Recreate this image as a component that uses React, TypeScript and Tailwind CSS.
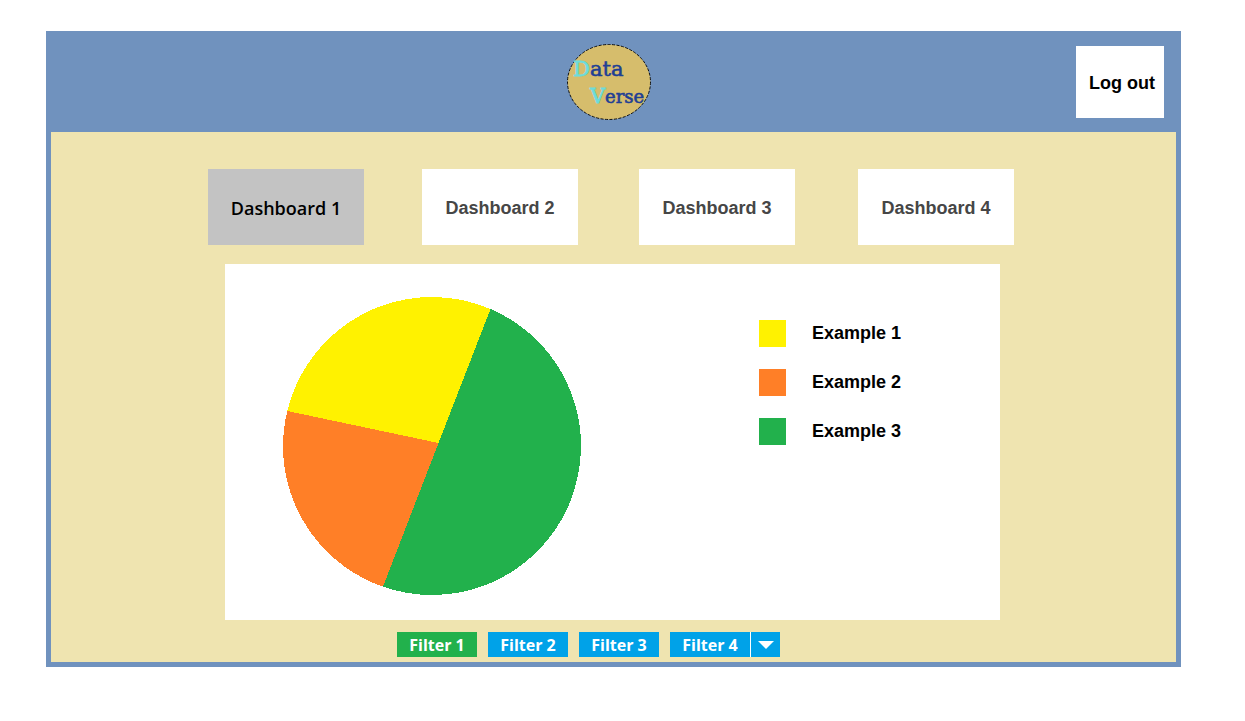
import { useState } from "react";

const dashboards = ["Dashboard 1", "Dashboard 2", "Dashboard 3", "Dashboard 4"];
const filters = ["Filter 1", "Filter 2", "Filter 3"];
const legend = [
  { label: "Example 1", color: "bg-[#fff200]" },
  { label: "Example 2", color: "bg-[#ff7f27]" },
  { label: "Example 3", color: "bg-[#22b14c]" },
];

function Logo() {
  return (
    <svg width="84" height="76" viewBox="0 0 84 76" role="img" aria-label="Data Verse">
      <ellipse cx="42" cy="38" rx="41.5" ry="37.5" fill="#d6bd6c" stroke="#111" strokeDasharray="3 1.5" />
      <g fontFamily="'DejaVu Serif', serif">
        <text x="6" y="32" fontSize="21" fill="#6cdcdc" stroke="#6cdcdc" strokeWidth="0.8">D</text>
        <text x="23" y="32" fontSize="21" fill="#1f3f94" stroke="#1f3f94" strokeWidth="0.6">ata</text>
        <text x="23" y="59" fontSize="21" fill="#6cdcdc" stroke="#6cdcdc" strokeWidth="0.8">V</text>
        <text x="38" y="59" fontSize="18" fill="#1f3f94" stroke="#1f3f94" strokeWidth="0.6">erse</text>
      </g>
    </svg>
  );
}

function PieChart() {
  return (
    <svg width="298" height="298" viewBox="0 0 298 298" shapeRendering="crispEdges" role="img" aria-label="Pie chart" className="shrink-0">
      <path d="M155.5 146 L207.5 12 A149 149 0 0 1 298 149 A149 149 0 0 1 149 298 A149 149 0 0 1 100 289.7 Z" fill="#22b14c" />
      <path d="M155.5 146 L4.3 114 A149 149 0 0 1 149 0 A149 149 0 0 1 207.5 12 Z" fill="#fff200" />
      <path d="M155.5 146 L100 289.7 A149 149 0 0 1 0 149 A149 149 0 0 1 4.3 114 Z" fill="#ff7f27" />
    </svg>
  );
}

export default function App() {
  const [tab, setTab] = useState("Dashboard 1");
  const [filter, setFilter] = useState("Filter 1");

  const filterClass = (name: string) =>
    `h-[25px] w-20 pt-px font-['Open_Sans',sans-serif] text-base font-bold leading-6 text-white ${
      filter === name ? "bg-[#22b14c]" : "bg-[#00a2e8]"
    }`;

  return (
    <div className="min-h-screen bg-white pt-[31px] pr-16 pl-[46px] font-['Liberation_Sans',sans-serif]">
      <div className="border-x-[5px] border-b-[5px] border-[#7092be] bg-[#efe4b0]">
        <header className="grid grid-cols-[1fr_auto_1fr] items-center bg-[#7092be] pt-[13px] pr-3 pb-3 pl-[3px]">
          <div className="col-start-2">
            <Logo />
          </div>
          <button className="h-18 w-22 justify-self-end bg-white pt-[2px] pl-1 text-lg font-bold text-black">
            Log out
          </button>
        </header>

        <main className="flex flex-col items-center pt-[37px] pr-[2px] pb-[5px]">
          <nav className="grid grid-cols-[214px_217px_219px_156px] pr-[3px]">
            {dashboards.map((name) => (
              <button
                key={name}
                onClick={() => setTab(name)}
                className={`h-19 w-39 pt-[2px] text-lg ${
                  tab === name
                    ? "bg-[#c3c3c3] font-['Open_Sans',sans-serif] font-semibold text-black"
                    : "bg-white font-bold text-[#464646]"
                }`}
              >
                {name}
              </button>
            ))}
          </nav>

          <section className="mt-[19px] flex w-full max-w-[775px] items-start justify-between bg-white pt-[33px] pr-24 pb-[25px] pl-[58px]">
            <PieChart />
            <ul className="flex flex-col gap-[22px] pt-[23px]">
              {legend.map((item) => (
                <li key={item.label} className="flex items-center gap-[26px] pr-[3px] text-lg font-bold leading-[27px] text-black">
                  <span className={`size-[27px] ${item.color}`} />
                  {item.label}
                </li>
              ))}
            </ul>
          </section>

          <div className="mt-3 flex gap-[11px] pr-12">
            {filters.map((name) => (
              <button key={name} onClick={() => setFilter(name)} className={filterClass(name)}>
                {name}
              </button>
            ))}
            <div className="flex gap-px bg-white">
              <button onClick={() => setFilter("Filter 4")} className={filterClass("Filter 4")}>
                Filter 4
              </button>
              <button aria-label="More filters" className="flex w-[29px] items-center justify-center bg-[#00a2e8]">
                <svg width="16" height="8" viewBox="0 0 16 8">
                  <path d="M0 0H16L8 8Z" fill="#fff" />
                </svg>
              </button>
            </div>
          </div>
        </main>
      </div>
    </div>
  );
}
